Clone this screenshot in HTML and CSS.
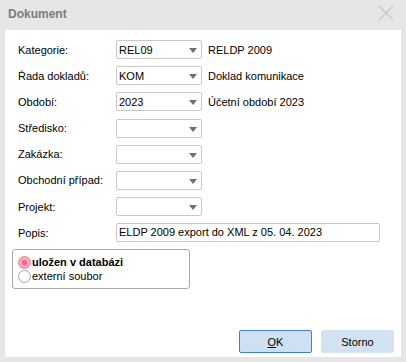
FILE: index.html
```html
<!DOCTYPE html>
<html lang="cs">
  <head>
    <meta charset="UTF-8" />
    <title>Dokument</title>
    <link rel="stylesheet" href="styles.css">
  </head>
  <body>
    <div class="dialog">
      <div class="titlebar">
        <span class="title">Dokument</span>
        <svg class="close" width="16" height="16" viewBox="0 0 16 16">
          <path d="M1 1 L15 15 M15 1 L1 15" stroke="#c9c9c9" stroke-width="1.4" fill="none" />
        </svg>
      </div>
      <div class="panel">
        <div class="form">
          <label class="label">Kategorie:</label>
          <div class="combo"><span>REL09</span><i class="arrow"></i></div>
          <span class="desc">RELDP 2009</span>

          <label class="label">Řada dokladů:</label>
          <div class="combo"><span>KOM</span><i class="arrow"></i></div>
          <span class="desc">Doklad komunikace</span>

          <label class="label">Období:</label>
          <div class="combo"><span>2023</span><i class="arrow"></i></div>
          <span class="desc">Účetní období 2023</span>

          <label class="label">Středisko:</label>
          <div class="combo"><span></span><i class="arrow"></i></div>
          <span class="desc"></span>

          <label class="label">Zakázka:</label>
          <div class="combo"><span></span><i class="arrow"></i></div>
          <span class="desc"></span>

          <label class="label">Obchodní případ:</label>
          <div class="combo"><span></span><i class="arrow"></i></div>
          <span class="desc"></span>

          <label class="label">Projekt:</label>
          <div class="combo"><span></span><i class="arrow"></i></div>
          <span class="desc"></span>

          <label class="label">Popis:</label>
          <div class="text-input">ELDP 2009 export do XML z 05. 04. 2023</div>
        </div>

        <div class="storage">
          <div class="radio-row selected">
            <span class="radio"></span>
            <span>uložen v databázi</span>
          </div>
          <div class="radio-row">
            <span class="radio"></span>
            <span>externí soubor</span>
          </div>
        </div>

        <div class="buttons">
          <button class="btn btn-ok"><u>O</u>K</button>
          <button class="btn">Storno</button>
        </div>
      </div>
    </div>
  </body>
</html>
```

FILE: styles.css
```css
body {
  margin: 0;
  background-color: #e6e6e6;
  font-family: "Liberation Sans", Arial, sans-serif;
  font-size: 11px;
  color: #000;
}

.dialog {
  width: 406px;
  height: 362px;
  display: flex;
  flex-direction: column;
}

.titlebar {
  height: 30px;
  display: flex;
  align-items: center;
  justify-content: space-between;
  padding: 0 12px 2px 8px;
  box-sizing: border-box;
}

.title {
  font-weight: bold;
  font-size: 12px;
  color: #7b7b7b;
}

.close {
  margin-top: -2px;
}

.panel {
  flex: 1;
  margin: 0 5px 5px 5px;
  background-color: #fff;
  padding: 10px 7px 4px 7px;
  display: flex;
  flex-direction: column;
}

.form {
  margin-left: 6px;
  display: grid;
  grid-template-columns: 98px 86px 1fr;
  grid-auto-rows: 19px;
  row-gap: 7.2px;
  align-items: center;
}

.label {
  white-space: nowrap;
}

.combo {
  height: 19px;
  box-sizing: border-box;
  border: 1px solid #c8c8c8;
  border-radius: 2px;
  display: flex;
  align-items: center;
  justify-content: space-between;
  padding: 0 4px 0 2px;
}

.arrow {
  width: 0;
  height: 0;
  border-left: 4px solid transparent;
  border-right: 4px solid transparent;
  border-top: 5px solid #707070;
  margin-top: 2px;
}

.desc {
  padding-left: 6px;
}

.text-input {
  grid-column: 2 / 4;
  width: 264px;
  height: 19px;
  box-sizing: border-box;
  border: 1px solid #c8c8c8;
  border-radius: 2px;
  padding: 0 2px;
  line-height: 17px;
}

.storage {
  margin-top: 7px;
  width: 178px;
  height: 40px;
  box-sizing: border-box;
  border: 1px solid #a9a9a9;
  border-radius: 3px;
  padding: 5px 0 0 5px;
}

.radio-row {
  height: 14px;
  display: flex;
  align-items: center;
  gap: 1px;
}

.radio {
  width: 13px;
  height: 13px;
  box-sizing: border-box;
  border: 1px solid #a8a8a8;
  border-radius: 50%;
  background-color: #fff;
}

.selected {
  font-weight: bold;
}

.selected .radio {
  border-color: #e5798f;
  background: radial-gradient(circle, #ee6a84 0, #ee6a84 2.5px, #f8adbc 3.2px);
}

.buttons {
  margin-top: auto;
  display: flex;
  justify-content: flex-end;
  gap: 9px;
}

.btn {
  width: 73px;
  height: 23px;
  font-family: "Liberation Sans", Arial, sans-serif;
  font-size: 11px;
  color: #000;
  background-color: #d3e2f3;
  border: 1px solid #d3e2f3;
  border-radius: 2px;
  padding: 0;
}

.btn-ok {
  border-color: #3d7ed4;
  background-color: #cfe0f3;
}
```
